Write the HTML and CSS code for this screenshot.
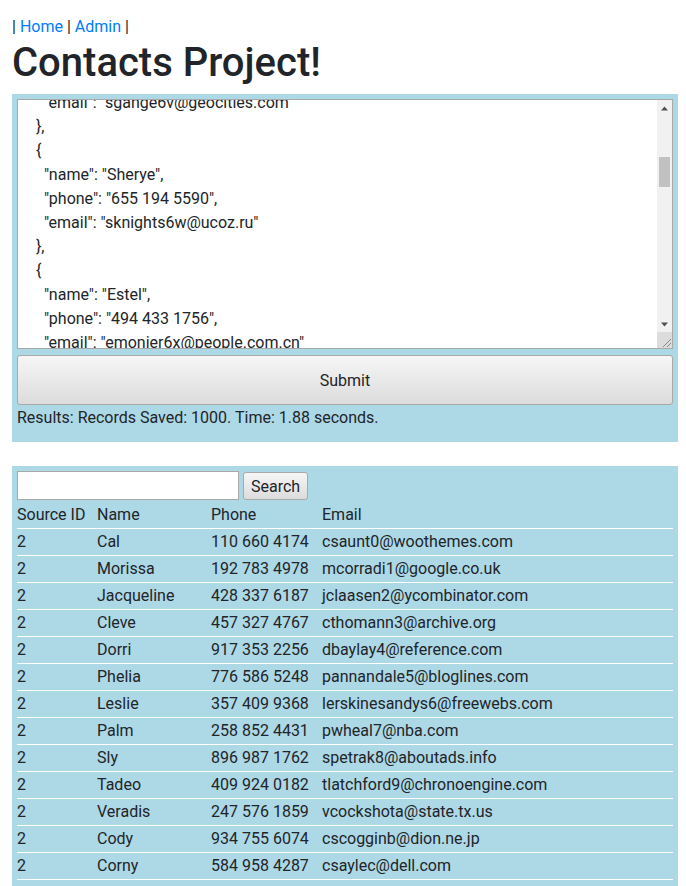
FILE: index.html
```html
<!DOCTYPE html>
<html lang="en">
<head>
<meta charset="utf-8">
<title>Contacts Project</title>
<link rel="stylesheet" href="styles.css">
</head>
<body>
<div class="page">
  <nav class="nav">| <a href="#">Home</a> | <a href="#">Admin</a> |</nav>
  <h1 class="title">Contacts Project!</h1>

  <section class="panel upload">
    <div class="editor">
      <textarea id="json" class="json-input" spellcheck="true"></textarea>
      <div class="vscroll" aria-hidden="true">
        <div class="sb-btn">
          <svg width="15" height="15" viewBox="0 0 15 15"><polygon points="4,10.5 11,10.5 7.5,6.5" fill="#505050"/></svg>
        </div>
        <div class="sb-track"><div class="sb-thumb"></div></div>
        <div class="sb-btn">
          <svg width="15" height="15" viewBox="0 0 15 15"><polygon points="4,5.5 11,5.5 7.5,9.5" fill="#505050"/></svg>
        </div>
        <div class="sb-corner">
          <svg width="15" height="16" viewBox="0 0 15 16"><line x1="14" y1="7" x2="6" y2="15" stroke="#8a8a8a" stroke-width="1"/><line x1="14" y1="11" x2="10" y2="15" stroke="#8a8a8a" stroke-width="1"/></svg>
        </div>
      </div>
    </div>
    <button class="submit-btn" type="button">Submit</button>
    <div class="results">Results: Records Saved: 1000. Time: 1.88 seconds.</div>
  </section>

  <section class="panel list">
    <div class="search-row">
      <input class="search-input" type="text">
      <button class="search-btn" type="button">Search</button>
    </div>
    <table class="contacts">
      <thead>
        <tr><th class="c-id">Source ID</th><th class="c-name">Name</th><th class="c-phone">Phone</th><th>Email</th></tr>
      </thead>
      <tbody>
        <tr><td>2</td><td>Cal</td><td>110 660 4174</td><td>csaunt0@woothemes.com</td></tr>
        <tr><td>2</td><td>Morissa</td><td>192 783 4978</td><td>mcorradi1@google.co.uk</td></tr>
        <tr><td>2</td><td>Jacqueline</td><td>428 337 6187</td><td>jclaasen2@ycombinator.com</td></tr>
        <tr><td>2</td><td>Cleve</td><td>457 327 4767</td><td>cthomann3@archive.org</td></tr>
        <tr><td>2</td><td>Dorri</td><td>917 353 2256</td><td>dbaylay4@reference.com</td></tr>
        <tr><td>2</td><td>Phelia</td><td>776 586 5248</td><td>pannandale5@bloglines.com</td></tr>
        <tr><td>2</td><td>Leslie</td><td>357 409 9368</td><td>lerskinesandys6@freewebs.com</td></tr>
        <tr><td>2</td><td>Palm</td><td>258 852 4431</td><td>pwheal7@nba.com</td></tr>
        <tr><td>2</td><td>Sly</td><td>896 987 1762</td><td>spetrak8@aboutads.info</td></tr>
        <tr><td>2</td><td>Tadeo</td><td>409 924 0182</td><td>tlatchford9@chronoengine.com</td></tr>
        <tr><td>2</td><td>Veradis</td><td>247 576 1859</td><td>vcockshota@state.tx.us</td></tr>
        <tr><td>2</td><td>Cody</td><td>934 755 6074</td><td>cscogginb@dion.ne.jp</td></tr>
        <tr><td>2</td><td>Corny</td><td>584 958 4287</td><td>csaylec@dell.com</td></tr>
      </tbody>
    </table>
  </section>
</div>
<script src="script.js"></script>
</body>
</html>
```

FILE: styles.css
```css
html, body {
  margin: 0;
  padding: 0;
  background: #ffffff;
}

body {
  font-family: Roboto, "Liberation Sans", sans-serif;
  font-size: 16px;
  line-height: 24px;
  color: #212529;
}

.page {
  padding: 15px 8px 0 12px;
}

.nav {
  height: 24px;
}

.nav a {
  color: #007bff;
  text-decoration: none;
}

.title {
  font-size: 40px;
  font-weight: 500;
  line-height: 48px;
  margin: 0 0 7px 0;
}

.panel {
  background: #add8e6;
  padding: 5px;
}

.upload {
  padding-bottom: 12px;
  margin-bottom: 24px;
}

.list {
  padding-bottom: 14px;
}

.editor {
  display: flex;
  box-sizing: border-box;
  height: 250px;
  border: 1px solid #a9a9a9;
  background: #ffffff;
  margin-bottom: 6px;
}

.json-input {
  flex: 1;
  min-width: 0;
  box-sizing: border-box;
  height: 100%;
  margin: 0;
  padding: 6px 10px;
  border: 0;
  outline: none;
  resize: none;
  overflow: hidden;
  font-family: Roboto, "Liberation Sans", sans-serif;
  font-size: 16px;
  line-height: 24px;
  color: #212529;
  background: #ffffff;
}

.vscroll {
  width: 15px;
  flex: none;
  display: flex;
  flex-direction: column;
  background: #f1f1f1;
}

.sb-btn {
  height: 15px;
  flex: none;
}

.sb-btn svg,
.sb-corner svg {
  display: block;
}

.sb-track {
  flex: 1;
  padding: 42px 2px 0;
}

.sb-thumb {
  height: 30px;
  background: #c1c1c1;
}

.sb-corner {
  height: 16px;
  flex: none;
  background: #dcdcdc;
}

.submit-btn,
.search-btn {
  font-family: Roboto, "Liberation Sans", sans-serif;
  font-size: 16px;
  color: #212529;
  background: linear-gradient(#f6f6f6, #dcdcdc);
  border: 1px solid #a9a9a9;
  border-radius: 3px;
  cursor: pointer;
}

.submit-btn {
  display: block;
  width: 100%;
  height: 50px;
}

.results {
  line-height: 24px;
  margin-top: 1px;
}

.search-row {
  display: flex;
  align-items: flex-start;
  gap: 4px;
}

.search-input {
  box-sizing: border-box;
  width: 222px;
  height: 29px;
  border: 1px solid #a9a9a9;
  border-radius: 0;
  background: #ffffff;
  font-family: Roboto, "Liberation Sans", sans-serif;
  font-size: 16px;
  padding: 2px 4px;
}

.search-btn {
  height: 28px;
  margin-top: 1px;
  padding: 1px 7px 0;
  line-height: 24px;
}

.contacts {
  width: 100%;
  border-collapse: collapse;
  margin-top: 2px;
}

.contacts th,
.contacts td {
  text-align: left;
  font-weight: 400;
  padding: 1px 2px 1px 0;
  border-bottom: 1px solid #ffffff;
  white-space: nowrap;
}

.contacts .c-id { width: 78px; }
.contacts .c-name { width: 112px; }
.contacts .c-phone { width: 109px; }
```

FILE: script.js
```js
(function () {
  var first = ["Alma","Bram","Celia","Dex","Edda","Finn","Gwen","Hugo","Ines","Jory","Kara","Lyle","Mina","Nate","Opal","Pete","Quin","Rina","Saul","Tess"];
  var last = ["ash","bell","cole","dunn","eade","fray","gale","holt","ives","jard"];
  var doms = ["example.com","mail.org","site.net","web.io","host.biz"];
  var data = [];
  for (var i = 0; i < 1000; i++) {
    var n = first[i % first.length];
    var p = String(100 + (i * 37) % 900) + " " + String(100 + (i * 53) % 900) + " " + String(1000 + (i * 71) % 9000);
    data.push({ name: n, phone: p, email: (n.charAt(0) + last[i % last.length] + i.toString(36)).toLowerCase() + "@" + doms[i % doms.length] });
  }
  data[247] = { name: "Sib", phone: "312 540 8812", email: "sgange6v@geocities.com" };
  data[248] = { name: "Sherye", phone: "655 194 5590", email: "sknights6w@ucoz.ru" };
  data[249] = { name: "Estel", phone: "494 433 1756", email: "emonier6x@people.com.cn" };
  var ta = document.getElementById("json");
  ta.value = JSON.stringify(data, null, 2);
  var lineIndex = 4 + 5 * 247;
  ta.scrollTop = 6 + lineIndex * 24 + 9;
})();
```
